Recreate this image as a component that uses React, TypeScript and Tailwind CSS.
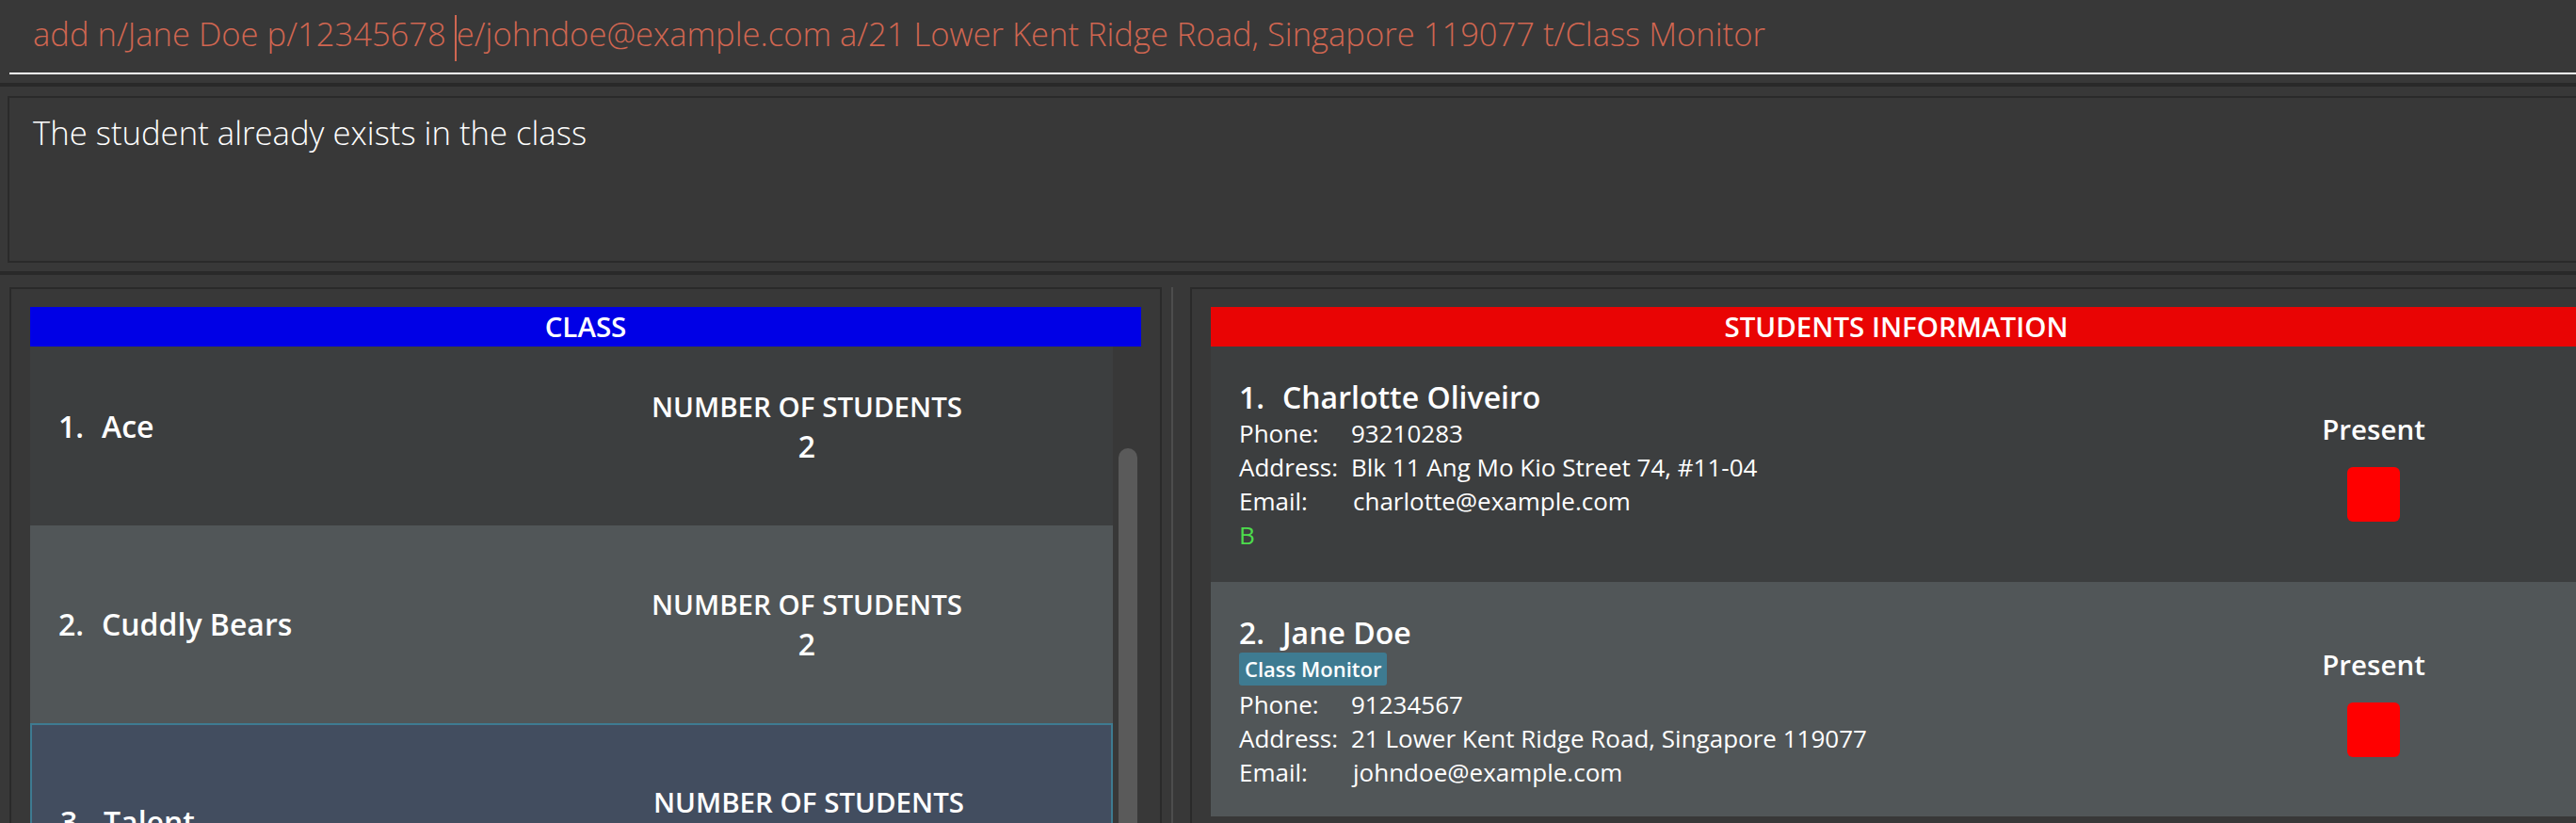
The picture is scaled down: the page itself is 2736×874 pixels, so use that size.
import React from "react";

type ClassRow = {
  name: string;
  count: number;
  className: string;
};

type Student = {
  name: string;
  tag?: string;
  phone: string;
  address: string;
  email: string;
  group?: string;
  className: string;
};

const classRows: ClassRow[] = [
  { name: "Ace", count: 2, className: "h-[190px] pb-[20px] bg-[#3c3e3f]" },
  { name: "Cuddly Bears", count: 2, className: "h-[210px] bg-[#515658]" },
  {
    name: "Talent",
    count: 1,
    className: "h-[210px] bg-[#424d5f] border-2 border-[#3e7b91]",
  },
];

const students: Student[] = [
  {
    name: "Charlotte Oliveiro",
    phone: "93210283",
    address: "Blk 11 Ang Mo Kio Street 74, #11-04",
    email: "charlotte@example.com",
    group: "B",
    className: "h-[250px] bg-[#3c3e3f]",
  },
  {
    name: "Jane Doe",
    tag: "Class Monitor",
    phone: "91234567",
    address: "21 Lower Kent Ridge Road, Singapore 119077",
    email: "johndoe@example.com",
    className: "h-[249px] bg-[#515658]",
  },
];

const ClassCell = ({ row, index }: { row: ClassRow; index: number }) => (
  <div className={`flex shrink-0 items-center pl-[30px] text-white ${row.className}`}>
    <div className="flex w-[630px] text-[32px] font-semibold leading-[42px]">
      <span className="w-[46px]">{index + 1}.</span>
      <span>{row.name}</span>
    </div>
    <div className="flex w-[330px] flex-col items-center font-semibold">
      <div className="whitespace-nowrap text-[29.5px] leading-[42px]">NUMBER OF STUDENTS</div>
      <div className="text-[32px] leading-[42px]">{row.count}</div>
    </div>
  </div>
);

const StudentCard = ({ s, index }: { s: Student; index: number }) => (
  <div className={`flex shrink-0 pl-[30px] pt-[34px] text-white ${s.className}`}>
    <div className="flex w-[1125px] flex-col">
      <div className="flex text-[32px] font-semibold leading-[40px]">
        <span className="w-[46px]">{index + 1}.</span>
        <span>{s.name}</span>
      </div>
      {s.tag && (
        <div className="mt-[1px] mb-[2px] flex">
          <span className="flex h-[35px] items-center rounded-[3px] bg-[#3e7b91] px-[6px] text-[22px] font-semibold">
            {s.tag}
          </span>
        </div>
      )}
      <div className="text-[26px] leading-[36px]">
        <div className="flex">
          <span className="w-[119px]">Phone:</span>
          <span>{s.phone}</span>
        </div>
        <div className="flex">
          <span className="w-[119px]">Address:</span>
          <span>{s.address}</span>
        </div>
        <div className="flex">
          <span className="w-[121px]">Email:</span>
          <span>{s.email}</span>
        </div>
        {s.group && <div className="text-[#4cdc4c]">{s.group}</div>}
      </div>
    </div>
    <div className="flex w-[160px] flex-col items-center pt-[34px]">
      <div className="text-[29.5px] font-semibold leading-[40px]">Present</div>
      <div className="mt-[20px] h-[58px] w-[56px] rounded-[6px] bg-[#ff0000]" />
    </div>
  </div>
);

const App = () => {
  return (
    <div className="flex h-[874px] w-[2736px] flex-col overflow-hidden bg-[#383838] font-['Open_Sans','Liberation_Sans',sans-serif]">
      {/* command box */}
      <div className="h-[88px] shrink-0 pl-[10px]">
        <div className="flex h-[79px] items-center border-b-2 border-white pl-[25px] pb-[2px]">
          <div className="whitespace-nowrap text-[34.6px] font-light text-[#d06651]">
            add n/Jane Doe p/12345678{" "}
            <span className="inline-block h-[49px] w-[2px] bg-[#d06651] align-middle" />
            e/johndoe@example.com a/21 Lower Kent Ridge Road, Singapore 119077 t/Class Monitor
          </div>
        </div>
      </div>
      <div className="h-[4px] shrink-0 bg-[#292929]" />

      {/* result display */}
      <div className="shrink-0 pl-[8px] pt-[10px] pb-[9px]">
        <div className="h-[177px] border-2 border-r-0 border-[#2a2a2a] pl-[25px] pt-[11px]">
          <div className="text-[34.7px] font-light text-white">The student already exists in the class</div>
        </div>
      </div>
      <div className="h-[4px] shrink-0 bg-[#292929]" />

      {/* panels */}
      <div className="flex min-h-0 flex-1 pt-[13px] pl-[10px]">
        <div className="flex w-[1224px] shrink-0 flex-col border-2 border-b-0 border-[#2a2a2a] px-[20px] pt-[19px]">
          <div className="h-[42px] shrink-0 bg-[#0000e6] text-center text-[29.5px] font-semibold leading-[42px] text-white">
            CLASS
          </div>
          <div className="flex min-h-0 flex-1 overflow-hidden">
            <div className="flex w-[1150px] flex-col">
              {classRows.map((row, i) => (
                <ClassCell key={row.name} row={row} index={i} />
              ))}
            </div>
            <div className="w-[30px] pl-[6px] pt-[108px]">
              <div className="h-full w-[20px] rounded-t-[10px] bg-[#5a5a5a]" />
            </div>
          </div>
        </div>

        <div className="flex w-[30px] shrink-0 pl-[10px]">
          <div className="w-[2px] bg-[#4d4d4d]" />
        </div>

        <div className="flex w-[1498px] shrink-0 flex-col border-2 border-b-0 border-r-0 border-[#2a2a2a] px-[20px] pt-[19px]">
          <div className="h-[42px] shrink-0 bg-[#e90404] text-center text-[29.5px] font-semibold leading-[42px] text-white">
            STUDENTS INFORMATION
          </div>
          <div className="flex min-h-0 flex-1 flex-col overflow-hidden">
            {students.map((s, i) => (
              <StudentCard key={s.name} s={s} index={i} />
            ))}
          </div>
        </div>
      </div>
    </div>
  );
};

export default App;
